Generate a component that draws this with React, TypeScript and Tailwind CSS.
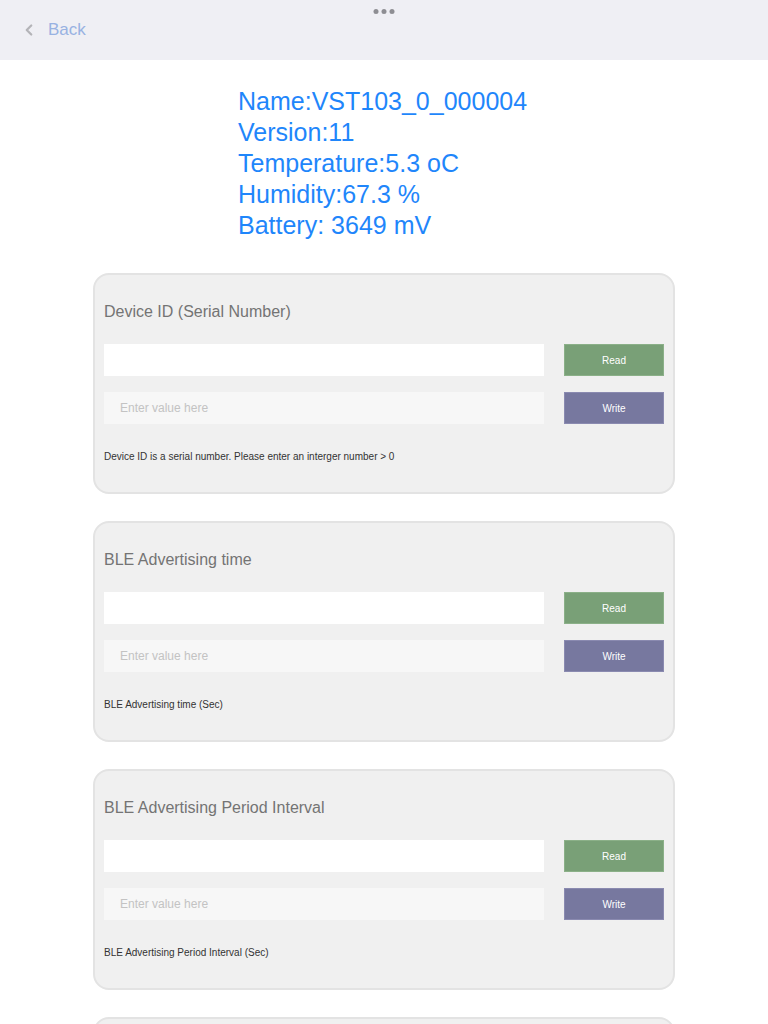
import { ChevronLeft } from "lucide-react";

type Setting = {
  title: string;
  help: string;
};

const settings: Setting[] = [
  {
    title: "Device ID (Serial Number)",
    help: "Device ID is a serial number. Please enter an interger number > 0",
  },
  { title: "BLE Advertising time", help: "BLE Advertising time (Sec)" },
  {
    title: "BLE Advertising Period Interval",
    help: "BLE Advertising Period Interval (Sec)",
  },
  { title: "Sensor Sampling Interval", help: "Sensor Sampling Interval (Sec)" },
];

function SettingCard({ title, help }: Setting) {
  return (
    <section className="rounded-[16px] border-2 border-[#e3e3e3] bg-[#f0f0f0] px-[9px] pt-[27px] pb-[28px]">
      <h2 className="text-[16px] leading-[20px] text-[#747474]">{title}</h2>
      <div className="mt-[22px] flex flex-col gap-[16px]">
        <div className="flex gap-[20px]">
          <div className="h-[32px] flex-1 bg-white" />
          <button
            type="button"
            className="h-[32px] w-[100px] border border-[#8bb088] bg-[#79a077] text-[10px] text-white"
          >
            Read
          </button>
        </div>
        <div className="flex gap-[20px]">
          <input
            placeholder="Enter value here"
            className="h-[32px] flex-1 bg-[#f7f7f7] px-[16px] text-[12px] placeholder:text-[#c3c3c3] outline-none"
          />
          <button
            type="button"
            className="h-[32px] w-[100px] border border-[#8a8ab0] bg-[#77789f] text-[10px] text-white"
          >
            Write
          </button>
        </div>
      </div>
      <p className="mt-[26px] text-[10px] leading-[14px] text-[#333]">{help}</p>
    </section>
  );
}

export default function App() {
  return (
    <div className="min-h-[1024px] bg-white font-['Liberation_Sans',Arial,sans-serif]">
      <header className="relative flex h-[60px] items-center bg-[#efeff4] pl-[20px]">
        <div className="absolute left-1/2 top-[9px] flex -translate-x-1/2 gap-[3px]">
          <span className="h-[5px] w-[5px] rounded-full bg-[#8e8e93]" />
          <span className="h-[5px] w-[5px] rounded-full bg-[#8e8e93]" />
          <span className="h-[5px] w-[5px] rounded-full bg-[#8e8e93]" />
        </div>
        <ChevronLeft className="h-[18px] w-[18px] text-[#b4b4b8]" strokeWidth={3} />
        <span className="ml-[10px] text-[17px] text-[#98b2e2]">Back</span>
      </header>
      <main className="flex flex-col items-center pt-[26px] pb-[40px]">
        <div className="w-[292px] text-[25px] leading-[31px] text-[#1f86fb]">
          <div>Name:VST103_0_000004</div>
          <div>Version:11</div>
          <div>Temperature:5.3 oC</div>
          <div>Humidity:67.3 %</div>
          <div>Battery: 3649 mV</div>
        </div>
        <div className="mt-[32px] flex w-[582px] flex-col gap-[27px]">
          {settings.map((s) => (
            <SettingCard key={s.title} {...s} />
          ))}
        </div>
      </main>
    </div>
  );
}
